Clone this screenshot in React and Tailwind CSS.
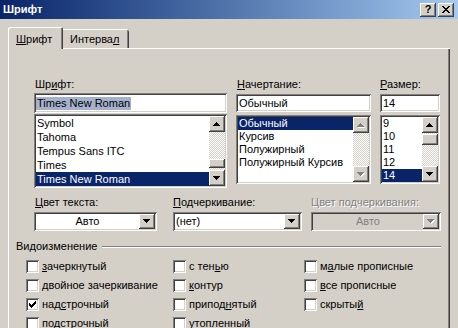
import React from "react";

const RAISED =
  "shadow-[inset_-1px_-1px_#404040,inset_1px_1px_#ffffff,inset_-2px_-2px_#808080,inset_2px_2px_#d4d0c8]";
const SUNKEN =
  "shadow-[inset_1px_1px_#808080,inset_-1px_-1px_#ffffff,inset_2px_2px_#404040,inset_-2px_-2px_#d4d0c8]";
const DITHER =
  "bg-[repeating-conic-gradient(#ffffff_0%_25%,#d4d0c8_0%_50%)] bg-size-[2px_2px]";

function Tri({ up, disabled }) {
  const d = up
    ? "M3 0h1v1h-1zM2 1h3v1h-3zM1 2h5v1h-5zM0 3h7v1h-7z"
    : "M0 0h7v1h-7zM1 1h5v1h-5zM2 2h3v1h-3zM3 3h1v1h-1z";
  return (
    <svg width="8" height="5" viewBox="0 0 8 5">
      {disabled && <path d={d} fill="#ffffff" transform="translate(1,1)" />}
      <path d={d} fill={disabled ? "#808080" : "#000000"} />
    </svg>
  );
}

function ArrowBtn({ up, disabled, cls }) {
  return (
    <div className={`${RAISED} bg-[#d4d0c8] flex items-center justify-center shrink-0 ${cls}`}>
      <Tri up={up} disabled={disabled} />
    </div>
  );
}

function ScrollBar({ disabled, gapCls, thumbCls }) {
  return (
    <div className="w-[16px] flex flex-col shrink-0">
      <ArrowBtn up disabled={disabled} cls="h-[16px]" />
      <div className={`flex-1 flex flex-col ${DITHER}`}>
        {thumbCls && (
          <>
            <div className={gapCls} />
            <div className={`${RAISED} bg-[#d4d0c8] ${thumbCls}`} />
          </>
        )}
      </div>
      <ArrowBtn disabled={disabled} cls="h-[16px]" />
    </div>
  );
}

function ListBox({ items, sel, rowCls, boxCls, scroll }) {
  return (
    <div className={`${SUNKEN} bg-white p-[2px] flex ${boxCls}`}>
      <div className="flex-1 flex flex-col overflow-hidden">
        {items.map((t, i) => (
          <div
            key={t}
            className={`${rowCls} pl-[1px] whitespace-nowrap ${
              i === sel ? "bg-[#0a246a] text-white" : "text-black"
            }`}
          >
            {t}
          </div>
        ))}
      </div>
      {scroll}
    </div>
  );
}

function Combo({ text, center, disabled }) {
  return (
    <div
      className={`${SUNKEN} ${disabled ? "bg-[#d4d0c8]" : "bg-white"} h-[19px] p-[2px] flex`}
    >
      <div
        className={`flex-1 flex items-center ${center ? "justify-center" : "pl-[1px]"} ${
          disabled ? "text-[#808080]" : "text-black"
        }`}
      >
        {text}
      </div>
      <ArrowBtn disabled={disabled} cls="w-[16px]" />
    </div>
  );
}

function Check({ checked, children }) {
  return (
    <div className="flex items-center h-[13px]">
      <div
        className={`${SUNKEN} bg-white w-[13px] h-[13px] shrink-0 flex items-center justify-center`}
      >
        {checked && (
          <svg width="7" height="7" viewBox="0 0 7 7">
            <path
              d="M0 2h1v3h-1zM1 3h1v3h-1zM2 4h1v3h-1zM3 3h1v3h-1zM4 2h1v3h-1zM5 1h1v3h-1zM6 0h1v3h-1z"
              fill="#000000"
            />
          </svg>
        )}
      </div>
      <span className="ml-[3px] whitespace-nowrap">{children}</span>
    </div>
  );
}

const U = ({ children }) => <span className="underline">{children}</span>;

export default function App() {
  return (
    <div className="w-[458px] h-[328px] overflow-hidden bg-[#d4d0c8] flex flex-col font-['Liberation_Sans',Arial,sans-serif] text-[11px] leading-[13px] text-black">
      {/* Title bar */}
      <div className="h-[19px] shrink-0 bg-gradient-to-r from-[#0a246a] to-[#a6caf0] flex items-center justify-between pl-[3px] pr-[4px]">
        <span className="text-white font-bold text-[11px]">Шрифт</span>
        <div className="flex gap-[2px]">
          <div className={`${RAISED} bg-[#d4d0c8] w-[16px] h-[14px] flex items-center justify-center`}>
            <span className="font-bold text-[11px] leading-[11px] text-black">?</span>
          </div>
          <div className={`${RAISED} bg-[#d4d0c8] w-[16px] h-[14px] flex items-center justify-center`}>
            <svg width="8" height="7" viewBox="0 0 8 7">
              <path
                d="M0 0h2v1h-2zM6 0h2v1h-2zM1 1h2v1h-2zM5 1h2v1h-2zM2 2h4v1h-4zM3 3h2v1h-2zM2 4h4v1h-4zM1 5h2v1h-2zM5 5h2v1h-2zM0 6h2v1h-2zM6 6h2v1h-2z"
                fill="#000000"
              />
            </svg>
          </div>
        </div>
      </div>

      {/* Tabs */}
      <div className="h-[29px] shrink-0 flex items-end ml-[8px]">
        <div className="relative z-10 -mb-[1px] h-[22px] w-[55px] bg-[#d4d0c8] rounded-tl-[2px] rounded-tr-[2px] shadow-[inset_1px_1px_#ffffff,inset_-1px_0_#404040,inset_-2px_0_#808080] pl-[8px] pt-[6px]">
          <U>Ш</U>рифт
        </div>
        <div className="h-[19px] w-[66px] bg-[#d4d0c8] rounded-tr-[2px] shadow-[inset_0_1px_#ffffff,inset_-1px_0_#404040,inset_-2px_0_#808080] pl-[7px] pt-[4px]">
          Интерва<U>л</U>
        </div>
      </div>

      {/* Panel */}
      <div className="flex-1 ml-[8px] w-[442px] flex flex-col shadow-[inset_1px_1px_#ffffff,inset_-1px_0_#404040,inset_-2px_0_#808080]">
        {/* Row 1 */}
        <div className="mt-[30px] ml-[26px] flex gap-[9px] items-start">
          <div className="w-[193px] flex flex-col">
            <div className="h-[13px] pl-[1px]">
              Шр<U>и</U>фт:
            </div>
            <div className={`${SUNKEN} bg-white mt-[2px] h-[20px] flex items-center pl-[2px]`}>
              <span className="bg-[#a6b2cc] leading-[13px] px-[1px]">Times New Roman</span>
            </div>
            <ListBox
              boxCls="mt-[1px] h-[74px]"
              rowCls="h-[14px] leading-[14px]"
              items={["Symbol", "Tahoma", "Tempus Sans ITC", "Times", "Times New Roman"]}
              sel={4}
              scroll={<ScrollBar gapCls="h-[27px]" thumbCls="h-[9px]" />}
            />
          </div>
          <div className="w-[135px] flex flex-col">
            <div className="h-[13px] pl-[1px]">
              <U>Н</U>ачертание:
            </div>
            <div className={`${SUNKEN} bg-white mt-[3px] h-[18px] flex items-center pl-[3px]`}>
              Обычный
            </div>
            <ListBox
              boxCls="mt-[3px] h-[69px]"
              rowCls="h-[13px] leading-[13px]"
              items={["Обычный", "Курсив", "Полужирный", "Полужирный Курсив"]}
              sel={0}
              scroll={<ScrollBar disabled />}
            />
          </div>
          <div className="w-[60px] flex flex-col">
            <div className="h-[13px]">
              <U>Р</U>азмер:
            </div>
            <div className={`${SUNKEN} bg-white mt-[3px] h-[18px] flex items-center pl-[3px]`}>
              14
            </div>
            <ListBox
              boxCls="mt-[3px] h-[69px]"
              rowCls="h-[13px] leading-[13px]"
              items={["9", "10", "11", "12", "14"]}
              sel={4}
              scroll={<ScrollBar gapCls="h-[1px]" thumbCls="h-[11px]" />}
            />
          </div>
        </div>

        {/* Row 2 */}
        <div className="mt-[8px] ml-[26px] flex items-start">
          <div className="w-[123px] flex flex-col">
            <div className="h-[13px] pl-[1px]">
              <U>Ц</U>вет текста:
            </div>
            <div className="mt-[3px]">
              <Combo text="Авто" center />
            </div>
          </div>
          <div className="ml-[16px] w-[129px] flex flex-col">
            <div className="h-[13px]">
              <U>П</U>одчеркивание:
            </div>
            <div className="mt-[3px]">
              <Combo text="(нет)" />
            </div>
          </div>
          <div className="ml-[9px] w-[130px] flex flex-col">
            <div className="h-[13px] text-[#808080] [text-shadow:1px_1px_0_#ffffff]">
              Цвет подчеркивания:
            </div>
            <div className="mt-[3px]">
              <Combo text="Авто" center disabled />
            </div>
          </div>
        </div>

        {/* Heading */}
        <div className="mt-[9px] ml-[8px] w-[425px] h-[13px] flex items-center">
          <span className="whitespace-nowrap">Видоизменение</span>
          <div className="flex-1 ml-[5px] border-t border-t-[#808080] border-b border-b-white" />
        </div>

        {/* Checkboxes */}
        <div className="mt-[7px] ml-[18px] grid grid-cols-[147px_131px_1fr] gap-y-[6px]">
          <Check>
            <U>з</U>ачеркнутый
          </Check>
          <Check>
            с тен<U>ь</U>ю
          </Check>
          <Check>
            м<U>а</U>лые прописные
          </Check>
          <Check>
            <U>д</U>войное зачеркивание
          </Check>
          <Check>
            <U>к</U>онтур
          </Check>
          <Check>
            <U>в</U>се прописные
          </Check>
          <Check checked>
            над<U>с</U>трочный
          </Check>
          <Check>
            припод<U>н</U>ятый
          </Check>
          <Check>
            скрыты<U>й</U>
          </Check>
          <Check>
            по<U>д</U>строчный
          </Check>
          <Check>
            утопленный
          </Check>
          <div />
        </div>
      </div>
    </div>
  );
}
